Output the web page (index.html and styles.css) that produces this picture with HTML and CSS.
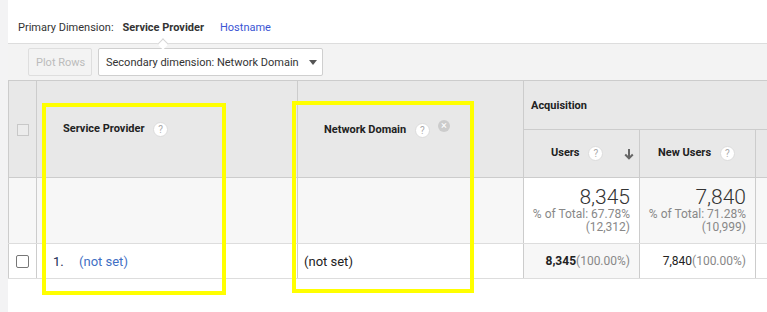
FILE: index.html
```html
<!DOCTYPE html>
<html lang="en">
<head>
    <meta charset="UTF-8">
    <meta name="viewport" content="width=device-width, initial-scale=1.0">
    <title>Service Provider Report</title>
    <link rel="stylesheet" href="styles.css">
</head>
<body>
    <div class="app">
        <aside class="rail"></aside>
        <main class="report">
            <div class="dim-bar">
                <span class="dim-label">Primary Dimension:</span>
                <span class="tab active">Service Provider</span>
                <a class="tab" href="#">Hostname</a>
            </div>

            <div class="toolbar">
                <button class="btn" disabled>Plot Rows</button>
                <button class="select">Secondary dimension: Network Domain <span class="caret"></span></button>
            </div>

            <table class="grid">
                <colgroup>
                    <col class="c-check">
                    <col class="c-dim">
                    <col class="c-dim2">
                    <col class="c-metric">
                    <col class="c-metric">
                    <col class="c-metric">
                </colgroup>
                <thead>
                    <tr class="head-top">
                        <th rowspan="2" class="check-cell"><span class="box box-head"></span></th>
                        <th rowspan="2" class="dim-head">Service Provider <span class="help">?</span></th>
                        <th rowspan="2" class="dim-head">Network Domain <span class="help">?</span><span class="remove">&times;</span></th>
                        <th colspan="3" class="group-head">Acquisition</th>
                    </tr>
                    <tr class="head-sub">
                        <th class="metric-head sorted-head">
                            <span>Users <span class="help">?</span></span>
                            <svg class="sort" viewBox="0 0 10 12" width="10" height="12">
                                <path d="M5 1v9.5M1.2 6.5L5 10.3l3.8-3.8" fill="none" stroke="#666" stroke-width="2"></path>
                            </svg>
                        </th>
                        <th class="metric-head">New Users <span class="help">?</span></th>
                        <th class="metric-head"></th>
                    </tr>
                </thead>
                <tbody>
                    <tr class="totals">
                        <td></td>
                        <td></td>
                        <td></td>
                        <td class="num sorted">
                            <div class="big">8,345</div>
                            <div class="small">% of Total: 67.78%</div>
                            <div class="small">(12,312)</div>
                        </td>
                        <td class="num">
                            <div class="big">7,840</div>
                            <div class="small">% of Total: 71.28%</div>
                            <div class="small">(10,999)</div>
                        </td>
                        <td class="num"></td>
                    </tr>
                    <tr class="row">
                        <td class="check-cell"><span class="box"></span></td>
                        <td class="dim-cell"><span class="idx">1.</span><a href="#">(not set)</a></td>
                        <td class="dim-cell2">(not set)</td>
                        <td class="num sorted"><b>8,345</b><span class="pct">(100.00%)</span></td>
                        <td class="num">7,840<span class="pct">(100.00%)</span></td>
                        <td class="num"></td>
                    </tr>
                </tbody>
            </table>
        </main>
    </div>

    <div class="mark mark-provider"></div>
    <div class="mark mark-domain"></div>
</body>
</html>
```

FILE: styles.css
```css
:root {
    --line: #cccccc;
    --row-line: #dddddd;
    --head-bg: #e8e8e8;
    --soft-bg: #f7f7f7;
    --text: #222222;
    --muted: #888888;
    --link: #3f6fc4;
    --mark: #ffff00;
}

* {
    margin: 0;
    padding: 0;
    box-sizing: border-box;
}

body {
    font-family: Roboto, "Liberation Sans", Arial, sans-serif;
    font-size: 11px;
    color: var(--text);
    background: #fff;
    overflow: hidden;
}

.app {
    display: flex;
    height: 312px;
}

.rail {
    width: 8px;
    flex-shrink: 0;
    background-color: #f3f3f4;
}

.report {
    flex: 1;
    overflow: hidden;
}

/* primary dimension tabs */
.dim-bar {
    height: 44px;
    display: flex;
    align-items: flex-end;
    padding: 0 10px 8px;
    border-bottom: 1px solid #dddddd;
    line-height: 14px;
    white-space: nowrap;
}

.dim-label {
    color: #333;
}

.tab {
    position: relative;
    margin-left: 9px;
    color: #3b55d4;
    text-decoration: none;
}

.tab + .tab {
    margin-left: 16px;
}

.tab.active {
    color: #333;
    font-weight: bold;
}

.tab.active::after {
    content: "";
    position: absolute;
    left: 50%;
    bottom: -13px;
    width: 7px;
    height: 7px;
    margin-left: -4px;
    background: #fff;
    border-left: 1px solid #d6d6d6;
    border-top: 1px solid #d6d6d6;
    transform: rotate(45deg);
}

/* toolbar */
.toolbar {
    height: 36px;
    background-color: #f3f3f3;
    padding: 4px 20px;
    display: flex;
    gap: 6px;
}

.btn,
.select {
    height: 28px;
    font-family: inherit;
    font-size: 11px;
    border-radius: 2px;
    padding: 0 7px;
    white-space: nowrap;
}

.btn {
    width: 64px;
    color: #bbbbbb;
    background: #f3f3f3;
    border: 1px solid #dedede;
}

.select {
    width: 225px;
    color: #333;
    background: #fff;
    border: 1px solid #cfcfcf;
    display: flex;
    align-items: center;
    gap: 10px;
}

.caret {
    border-left: 4px solid transparent;
    border-right: 4px solid transparent;
    border-top: 5px solid #555;
}

/* table */
.grid {
    border-collapse: collapse;
    table-layout: fixed;
    width: 863px;
}

.c-check { width: 28px; }
.c-dim { width: 261px; }
.c-dim2 { width: 226px; }
.c-metric { width: 116px; }

.grid th {
    background-color: var(--head-bg);
    border: 1px solid var(--line);
    text-align: left;
    font-weight: bold;
    font-size: 11px;
    white-space: nowrap;
}

.head-top th {
    height: 49px;
}

.head-sub th {
    height: 48px;
}

.check-cell {
    text-align: center !important;
}

.box {
    display: inline-block;
    width: 13px;
    height: 13px;
    border: 1px solid #777;
    border-radius: 2px;
    background: #fff;
    vertical-align: middle;
}

.box-head {
    width: 12px;
    height: 12px;
    border-color: #c8c8c8;
    border-radius: 0;
    background: #ececec;
}

.dim-head {
    padding-left: 26px;
}

.group-head {
    padding-left: 7px;
    vertical-align: middle;
}

.metric-head {
    padding-left: 18px;
}

.sorted-head {
    position: relative;
    padding-left: 27px;
    padding-right: 6px;
}

.sort {
    position: absolute;
    right: 5px;
    top: 18px;
}

.help {
    display: inline-block;
    width: 15px;
    height: 15px;
    margin-left: 6px;
    border-radius: 50%;
    background: #fff;
    border: 1px solid #dcdcdc;
    color: #aaa;
    font-size: 10px;
    font-weight: normal;
    line-height: 13px;
    text-align: center;
    vertical-align: middle;
}

.remove {
    display: inline-block;
    width: 12px;
    height: 12px;
    margin-left: 8px;
    border-radius: 50%;
    background: #cccccc;
    color: #fff;
    font-size: 11px;
    font-weight: normal;
    line-height: 12px;
    text-align: center;
    vertical-align: 4px;
}

.grid td {
    border: 1px solid var(--row-line);
    border-top: none;
    border-left-color: var(--line);
    border-right-color: var(--line);
}

.totals td {
    height: 66px;
    background-color: var(--soft-bg);
    vertical-align: top;
}

.totals td.sorted {
    background-color: #fff;
}

.num {
    text-align: right;
    padding-right: 9px;
    white-space: nowrap;
}

.big {
    font-size: 21px;
    font-weight: 300;
    color: #333;
    line-height: 21px;
    margin-top: 9px;
}

.small {
    font-size: 12px;
    color: var(--muted);
    line-height: 13px;
}

.row td {
    height: 35px;
    background: #fff;
    font-size: 12px;
}

.row td.sorted {
    background-color: var(--soft-bg);
}

.dim-cell,
.dim-cell2 {
    font-size: 13px !important;
}

.dim-cell {
    padding-left: 16px;
}

.idx {
    display: inline-block;
    width: 26px;
    color: #1a2a55;
}

.dim-cell a {
    color: var(--link);
    text-decoration: none;
}

.dim-cell2 {
    padding-left: 6px;
}

.pct {
    color: var(--muted);
    font-weight: normal;
}

/* highlight annotations drawn over the report */
.mark {
    position: absolute;
    border: 4px solid var(--mark);
}

.mark-provider {
    left: 42px;
    top: 103px;
    width: 184px;
    height: 192px;
}

.mark-domain {
    left: 292px;
    top: 101px;
    width: 182px;
    height: 192px;
}
```
